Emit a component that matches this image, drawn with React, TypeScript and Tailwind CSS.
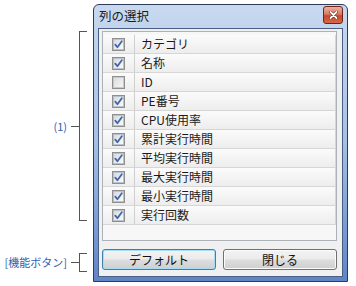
import React from 'react';

const columns = [
  { label: 'カテゴリ', checked: true },
  { label: '名称', checked: true },
  { label: 'ID', checked: false },
  { label: 'PE番号', checked: true },
  { label: 'CPU使用率', checked: true },
  { label: '累計実行時間', checked: true },
  { label: '平均実行時間', checked: true },
  { label: '最大実行時間', checked: true },
  { label: '最小実行時間', checked: true },
  { label: '実行回数', checked: true },
];

const CheckBox = ({ checked }: { checked: boolean }) => (
  <span className="flex h-[13px] w-[13px] items-center justify-center border border-[#8e8f8f] bg-white">
    <span
      className={`flex h-[11px] w-[11px] items-center justify-center border ${checked
        ? 'border-[#b9c1cc] bg-gradient-to-br from-[#d6dbe2] to-[#fbfbfb]'
        : 'border-[#c8c8c8] bg-gradient-to-br from-[#dcdcdc] to-[#f6f6f6]'
        }`}
    >
      {checked && (
        <svg width="9" height="9" viewBox="0 0 9 9" fill="none">
          <path d="M1.3 4.6 L3.4 7.2 L7.8 1.2" stroke="#4465a8" strokeWidth="1.8" strokeLinecap="round" strokeLinejoin="round" />
        </svg>
      )}
    </span>
  </span>
);

const Bracket = ({ label, height }: { label: string; height: string }) => (
  <div className={`flex items-center ${height}`}>
    <span className="flex-1 pr-[4px] text-right text-[11px] leading-none text-[#2f5eb0]">{label}</span>
    <span className="h-px w-[8px] bg-[#555]" />
    <span className="h-full w-[8px] border-y border-l border-[#555]" />
  </div>
);

const WinButton = ({ label, isDefault }: { label: string; isDefault?: boolean }) => (
  <button
    className={`flex h-[21px] flex-1 items-center justify-center rounded-[3px] border bg-[linear-gradient(#f3f3f3_0%,#ebebeb_48%,#dddddd_52%,#cfcfcf_100%)] text-[12px] leading-none text-[#111] ${isDefault
      ? 'border-[#3c7fb1] shadow-[inset_0_0_0_1px_#a6dcf5]'
      : 'border-[#707070] shadow-[inset_0_0_0_1px_#fbfbfb]'
      }`}
  >
    {label}
  </button>
);

export default function App() {
  return (
    <div className="flex h-[286px] w-[356px] bg-white font-['Noto_Sans_CJK_JP','Liberation_Sans',sans-serif]">
      {/* annotations */}
      <div className="flex w-[93px] flex-col pt-[31px] pr-[6px]">
        <Bracket label="(1)" height="h-[190px]" />
        <div className="mt-[32px]">
          <Bracket label="[機能ボタン]" height="h-[19px]" />
        </div>
      </div>

      {/* dialog window */}
      <div className="mt-[4px] flex h-[278px] w-[255px] flex-col rounded-t-[6px] border border-[#2c3c58] bg-gradient-to-b from-[#c8d9ef] via-[#a6bfe3] to-[#5f84c6] px-[4px] pb-[4px]">
        <div className="flex h-[23px] items-start justify-between">
          <span className="self-center pl-[1px] text-[12.5px] leading-none text-[#1b1b1b]">列の選択</span>
          <span className="mt-[1px] flex h-[18px] w-[20px] items-center justify-center rounded-[3px] border border-[#6b2519] bg-[linear-gradient(#eab1a2_0%,#dc7a62_45%,#c9472b_55%,#d8674a_100%)]">
            <svg width="9" height="8" viewBox="0 0 9 8">
              <path d="M1.5 1 L7.5 7 M7.5 1 L1.5 7" stroke="#5a1f16" strokeWidth="3" strokeLinecap="round" />
              <path d="M1.5 1 L7.5 7 M7.5 1 L1.5 7" stroke="#ffffff" strokeWidth="1.8" strokeLinecap="round" />
            </svg>
          </span>
        </div>

        <div className="flex flex-1 flex-col border border-[#4a5f84] bg-[#f0f0f0] pt-[2px] pr-[5px] pb-[6px] pl-[3px]">
          <div className="flex h-[210px] flex-col border border-[#adb2b8] bg-[#f7f7f7] pt-[3px]">
            {columns.map((c) => (
              <div
                key={c.label}
                className="flex h-[19px] border-b border-r border-[#d6d6d6] bg-gradient-to-b from-[#fbfbfb] to-[#ededed]"
              >
                <div className="flex w-[32px] items-center justify-center border-r border-[#cfcfcf]">
                  <CheckBox checked={c.checked} />
                </div>
                <div className="flex flex-1 items-center pl-[6px] text-[12px] leading-none text-[#1a1a1a]">
                  {c.label}
                </div>
              </div>
            ))}
          </div>

          <div className="mt-[8px] flex gap-[7px]">
            <WinButton label="デフォルト" isDefault />
            <WinButton label="閉じる" />
          </div>
        </div>
      </div>
    </div>
  );
}
